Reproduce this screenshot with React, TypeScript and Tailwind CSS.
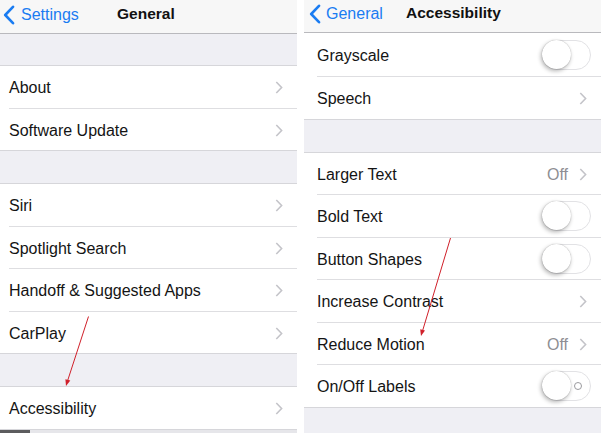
import React from "react";

const font = { fontFamily: '"Liberation Sans", Arial, sans-serif' };

const Chevron = () => (
  <svg width="8" height="13" viewBox="0 0 8 13">
    <path d="M1.3 1 L6.6 6.5 L1.3 12" fill="none" stroke="#c4c4c9" strokeWidth="1.6" />
  </svg>
);

const BackChevron = () => (
  <svg width="12" height="20" viewBox="0 0 12 20">
    <path d="M10 1.8 L2.2 10 L10 18.2" fill="none" stroke="#1a7cf2" strokeWidth="2.6" strokeLinecap="round" strokeLinejoin="round" />
  </svg>
);

const Toggle = ({ labels }: { labels?: boolean }) => (
  <div className="relative h-[30px] w-[49px] rounded-full border-[1.5px] border-[#e2e2e5] bg-white">
    <div className="absolute left-[-1.5px] top-[-1px] h-[29px] w-[29px] rounded-full bg-white shadow-[-1px_2px_4px_rgba(0,0,0,0.3),0_0_1px_rgba(0,0,0,0.35)]" />
    {labels && (
      <div className="absolute right-[8px] top-[10px] h-[8px] w-[8px] rounded-full border border-[#9a9a9e]" />
    )}
  </div>
);

type RowProps = {
  label: string;
  last?: boolean;
  indent: string;
  right?: React.ReactNode;
  h?: string;
};

const Row = ({ label, last, indent, right, h }: RowProps) => (
  <div className={`flex ${h ?? "h-[42.5px]"} bg-white ${last ? "border-b border-[#d6d6da]" : ""} ${indent}`}>
    <div className={`flex h-full flex-1 items-center ${last ? "" : "border-b border-[#dedee1]"}`}>
      <span className="flex-1 pt-[3px] text-[16px] text-[#141414]">{label}</span>
      {right}
    </div>
  </div>
);

const Gap = ({ h }: { h: string }) => <div className={`${h} border-b border-[#d6d6da] bg-[#efeff4]`} />;

const ChevronRight = ({ pr }: { pr: string }) => (
  <div className={`flex items-center pt-[2px] ${pr}`}>
    <Chevron />
  </div>
);

const OffRight = () => (
  <div className="flex items-center gap-[11px] pt-[3px] pr-[14px]">
    <span className="text-[16px] text-[#8e8e93]">Off</span>
    <Chevron />
  </div>
);

const ToggleRight = ({ labels }: { labels?: boolean }) => (
  <div className="pr-[10px] pt-[1px]">
    <Toggle labels={labels} />
  </div>
);

export default function App() {
  return (
    <div className="relative flex h-[433px] w-[601px] overflow-hidden bg-white" style={font}>
      {/* Left panel */}
      <div className="flex w-[297px] flex-col">
        <div className="relative flex h-[34px] items-center border-b border-[#b9b9bd] bg-[#f7f7f7] pb-[6px]">
          <div className="absolute left-[3px] top-[3px] flex items-center gap-[6px]">
            <BackChevron />
            <span className="text-[16px] text-[#1a7cf2]">Settings</span>
          </div>
          <div className="w-full pl-[117px] text-[15.5px] font-bold text-[#111]">General</div>
        </div>
        <Gap h="h-[32px]" />
        <Row label="About" indent="pl-[9px]" right={<ChevronRight pr="pr-[14px]" />} />
        <Row label="Software Update" indent="pl-[9px]" right={<ChevronRight pr="pr-[14px]" />} last />
        <Gap h="h-[33px]" />
        <Row label="Siri" indent="pl-[9px]" right={<ChevronRight pr="pr-[14px]" />} />
        <Row label="Spotlight Search" indent="pl-[9px]" right={<ChevronRight pr="pr-[14px]" />} />
        <Row label="Handoff & Suggested Apps" indent="pl-[9px]" right={<ChevronRight pr="pr-[14px]" />} />
        <Row label="CarPlay" indent="pl-[9px]" right={<ChevronRight pr="pr-[14px]" />} last />
        <Gap h="h-[33px]" />
        <Row label="Accessibility" indent="pl-[9px]" right={<ChevronRight pr="pr-[14px]" />} last />
        <div className="flex flex-1">
          <div className="w-[30px] bg-[#5c5c5e]" />
          <div className="flex-1 bg-[#e6e6ea]" />
        </div>
      </div>

      <div className="w-[7px] bg-white" />

      {/* Right panel */}
      <div className="flex flex-1 flex-col">
        <div className="relative flex h-[33px] items-center border-b border-[#b9b9bd] bg-[#f7f7f7] pb-[7px]">
          <div className="absolute left-[5px] top-[2px] flex items-center gap-[5px]">
            <BackChevron />
            <span className="text-[16px] text-[#1a7cf2]">General</span>
          </div>
          <div className="w-full pl-[102px] text-[15.5px] font-bold text-[#111]">Accessibility</div>
        </div>
        <Row label="Grayscale" indent="pl-[13px]" h="h-[44px]" right={<ToggleRight />} />
        <Row label="Speech" indent="pl-[13px]" right={<ChevronRight pr="pr-[14px]" />} last />
        <Gap h="h-[33px]" />
        <Row label="Larger Text" indent="pl-[13px]" right={<OffRight />} />
        <Row label="Bold Text" indent="pl-[13px]" right={<ToggleRight />} />
        <Row label="Button Shapes" indent="pl-[13px]" right={<ToggleRight />} />
        <Row label="Increase Contrast" indent="pl-[13px]" right={<ChevronRight pr="pr-[14px]" />} />
        <Row label="Reduce Motion" indent="pl-[13px]" right={<OffRight />} />
        <Row label="On/Off Labels" indent="pl-[13px]" right={<ToggleRight labels />} last />
        <div className="flex-1 bg-[#efeff4]" />
      </div>

      {/* Annotation arrows */}
      <svg className="pointer-events-none absolute left-0 top-0" width="601" height="433" viewBox="0 0 601 433">
        <line x1="88.5" y1="316.5" x2="67.5" y2="381" stroke="#d0202a" strokeWidth="1" />
        <polygon points="66,386 70.3,380.6 65.4,379.2" fill="#d0202a" />
        <line x1="450.5" y1="238" x2="422.5" y2="331" stroke="#d0202a" strokeWidth="1" />
        <polygon points="421,336 425,330.5 420.2,329.3" fill="#d0202a" />
      </svg>
    </div>
  );
}
